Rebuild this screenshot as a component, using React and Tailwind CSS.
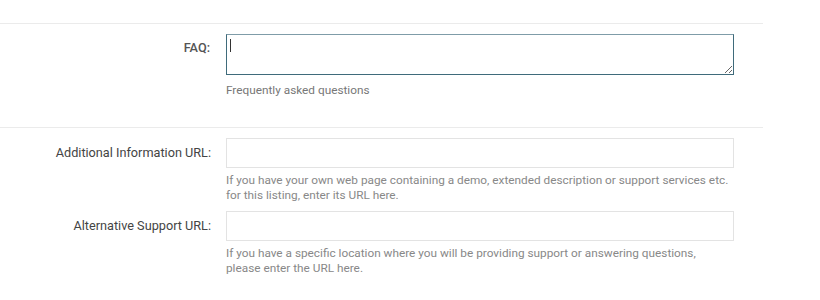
const rows = [
  {
    label: 'Additional Information URL:',
    help: ['If you have your own web page containing a demo, extended description or support services etc.', 'for this listing, enter its URL here.'],
  },
  {
    label: 'Alternative Support URL:',
    help: ['If you have a specific location where you will be providing support or answering questions,', 'please enter the URL here.'],
  },
]

export default function App() {
  return (
    <div className="bg-white w-[820px] h-[300px] font-['Roboto',sans-serif] overflow-hidden">
      <div className="w-[763px] pt-[23px]">
        <div className="border-t border-[#ebebeb] pt-[10px] pb-[29px]">
          <div className="flex">
            <label className="w-[211px] shrink-0 text-right text-[12.7px] font-medium text-[#555] pt-[4px] pr-[1px]">FAQ:</label>
            <div className="ml-[15px] w-[508px]">
              <div className="relative">
                <textarea className="block w-[508px] h-[41px] border border-[#3f6b7b] border-t-[#7f9ca8] outline-none px-1 py-1 text-[12px]" />
                <span className="absolute left-[4px] top-[5px] w-px h-[13px] bg-[#333]" />
              </div>
              <p className="text-[11.8px] text-[#777] mt-[8px] leading-[15px]">Frequently asked questions</p>
            </div>
          </div>
        </div>
        <div className="border-t border-[#ebebeb] pt-[10px] flex flex-col gap-[8px]">
          {rows.map((r, i) => (
            <div key={i} className="flex">
              <label className="w-[211px] shrink-0 text-right text-[12.7px] text-[#444] pt-[5px]">{r.label}</label>
              <div className="ml-[15px] w-[508px]">
                <input type="text" className="block w-[508px] h-[30px] border border-[#e3e3e3] outline-none px-2 text-[12px]" />
                <p className="text-[11.8px] text-[#888] mt-[5px] leading-[15px]">
                  {r.help[0]}
                  <br />
                  {r.help[1]}
                </p>
              </div>
            </div>
          ))}
        </div>
      </div>
    </div>
  )
}
